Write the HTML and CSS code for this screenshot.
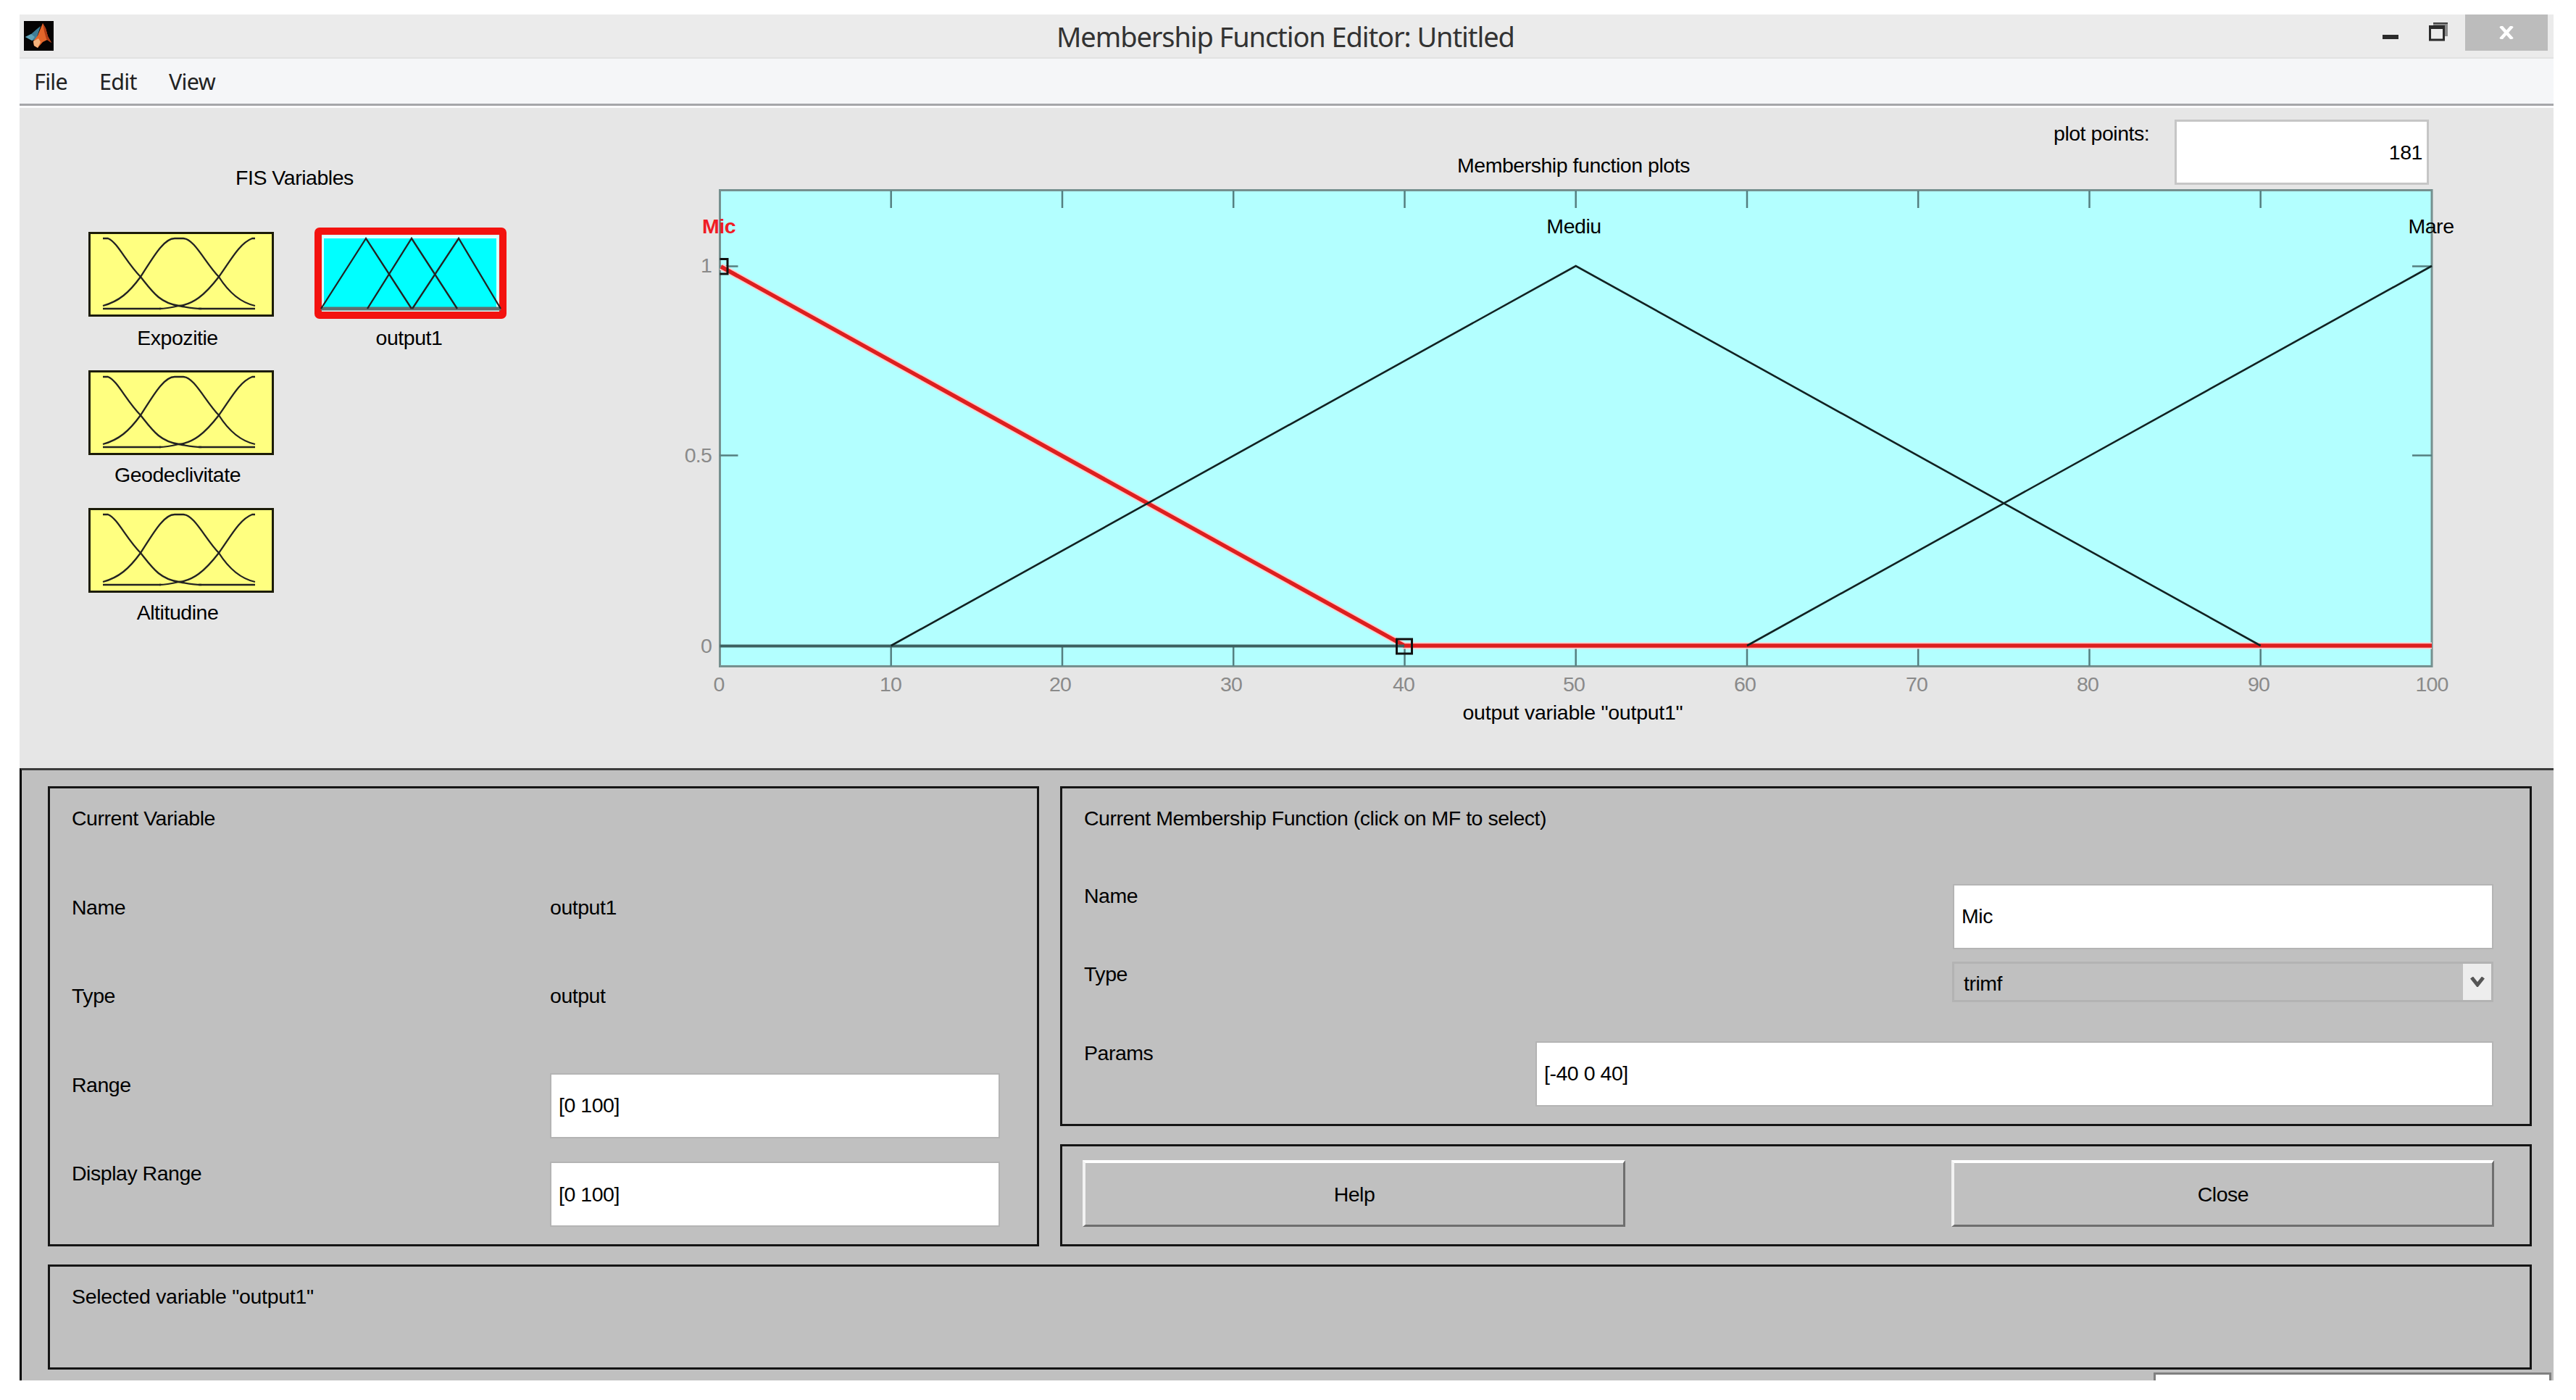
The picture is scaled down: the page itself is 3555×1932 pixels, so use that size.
FILE: index.html
```html
<!DOCTYPE html>
<html lang="en">
<head>
  <meta charset="UTF-8">
  <title>Membership Function Editor: Untitled</title>
  <link rel="stylesheet" href="styles.css">
</head>
<body>
  <div class="window">
    <header class="titlebar">
      <svg class="app-icon" viewBox="0 0 41 41">
        <rect width="41" height="41" fill="#050303"/>
        <path d="M2 22 L10 18 L18 11 L23 7 L17 25 L12 27 Z" fill="#3f7d96"/>
        <path d="M2 22 L10 18 L15 22 L11 27 Z" fill="#5fa3b8"/>
        <path d="M26 3 L30 10 L33 21 L38 30 L32 26 L26 29 L19 37 L14 34 L13 28 L19 20 Z" fill="#e4662a"/>
        <path d="M26 3 L30 10 L33 21 L38 30 L31 25 L28 14 Z" fill="#b03c16"/>
        <path d="M13 28 L20 24 L23 29 L19 37 L14 34 Z" fill="#f3b27c"/>
      </svg>
      <h1 class="title">Membership Function Editor: Untitled</h1>
      <div class="window-buttons">
        <svg class="win-min" viewBox="0 0 22 6"><rect width="22" height="6" fill="#2b2b2b"/></svg>
        <svg class="win-restore" viewBox="0 0 28 28">
          <path d="M6 2 H26 V21 H22 V7 H6 Z" fill="#8a8a8a"/>
          <path d="M6 3 H26" stroke="#444" stroke-width="2"/>
          <rect x="1.5" y="8" width="19" height="18" fill="#ececec" stroke="#2b2b2b" stroke-width="3"/>
          <path d="M0 8.5 H22" stroke="#2b2b2b" stroke-width="5"/>
        </svg>
        <div class="win-close">
          <svg viewBox="0 0 20 18"><path d="M2 0 L18 18 M18 0 L2 18" stroke="#fff" stroke-width="4.5"/></svg>
        </div>
      </div>
    </header>

    <nav class="menubar">
      <span class="menu-file">File</span>
      <span class="menu-edit">Edit</span>
      <span>View</span>
    </nav>

    <main class="plots">
      <section class="variables">
        <h2 class="variables-title">FIS Variables</h2>
        <div class="variables-list">
          <figure class="variable">
            <svg class="thumb" viewBox="0 0 256 117">
              <rect x="1.5" y="1.5" width="253" height="114" fill="#ffff80" stroke="#1c1c08" stroke-width="3"/>
              <g class="thumb-line">
                <path d="M20 9 H27 C40 14 52 42 72 62 C88 82 98 98 125 102 C140 105 150 106 156 106"/>
                <path d="M20 102 C42 96 56 84 72 62 C90 34 104 9 119 9 H131 C146 9 162 44 180 62 C194 84 212 98 230 102"/>
                <path d="M230 9 H226 C208 16 196 40 180 62 C160 88 144 100 125 102 C112 105 104 106 98 106"/>
                <path d="M20 106 H100 M152 106 H230"/>
              </g>
            </svg>
            <figcaption class="variable-name">Expozitie</figcaption>
          </figure>
          <figure class="variable variable-output">
            <svg class="thumb thumb-selected" viewBox="0 0 265 126">
              <rect x="5" y="5" width="255" height="116" rx="2" fill="#dff" stroke="#f3120f" stroke-width="10"/>
              <rect x="13" y="15" width="238" height="96" fill="#00ffff"/>
              <path d="M9 112 H257" stroke="#5f6f6f" stroke-width="5"/>
              <g class="thumb-line">
                <path d="M9 112 L71 15 L134 112"/>
                <path d="M73 112 L134 15 L197 112"/>
                <path d="M135 112 L199 15 L257 112"/>
              </g>
            </svg>
            <figcaption class="variable-name">output1</figcaption>
          </figure>
          <figure class="variable variable-input">
            <svg class="thumb" viewBox="0 0 256 117">
              <rect x="1.5" y="1.5" width="253" height="114" fill="#ffff80" stroke="#1c1c08" stroke-width="3"/>
              <g class="thumb-line">
                <path d="M20 9 H27 C40 14 52 42 72 62 C88 82 98 98 125 102 C140 105 150 106 156 106"/>
                <path d="M20 102 C42 96 56 84 72 62 C90 34 104 9 119 9 H131 C146 9 162 44 180 62 C194 84 212 98 230 102"/>
                <path d="M230 9 H226 C208 16 196 40 180 62 C160 88 144 100 125 102 C112 105 104 106 98 106"/>
                <path d="M20 106 H100 M152 106 H230"/>
              </g>
            </svg>
            <figcaption class="variable-name">Geodeclivitate</figcaption>
          </figure>
          <figure class="variable variable-input">
            <svg class="thumb" viewBox="0 0 256 117">
              <rect x="1.5" y="1.5" width="253" height="114" fill="#ffff80" stroke="#1c1c08" stroke-width="3"/>
              <g class="thumb-line">
                <path d="M20 9 H27 C40 14 52 42 72 62 C88 82 98 98 125 102 C140 105 150 106 156 106"/>
                <path d="M20 102 C42 96 56 84 72 62 C90 34 104 9 119 9 H131 C146 9 162 44 180 62 C194 84 212 98 230 102"/>
                <path d="M230 9 H226 C208 16 196 40 180 62 C160 88 144 100 125 102 C112 105 104 106 98 106"/>
                <path d="M20 106 H100 M152 106 H230"/>
              </g>
            </svg>
            <figcaption class="variable-name">Altitudine</figcaption>
          </figure>
        </div>
      </section>

      <section class="plot">
        <div class="plot-head">
          <h2 class="plot-title">Membership function plots</h2>
          <label class="points-label" for="points">plot points:</label>
          <input class="field points" id="points" type="text" value="181">
        </div>
        <svg class="chart" viewBox="900 255 2624 805">
          <rect class="axes" x="993.5" y="262.5" width="2362.5" height="657"/>
          <!-- ticks -->
          <path class="tick" d="M1229.7 263 v24 M1466 263 v24 M1702.2 263 v24 M1938.5 263 v24 M2174.7 263 v24 M2411 263 v24 M2647.2 263 v24 M2883.5 263 v24 M3119.7 263 v24"/>
          <path class="tick" d="M1229.7 919 v-27 M1466 919 v-27 M1702.2 919 v-27 M1938.5 919 v-27 M2174.7 919 v-27 M2411 919 v-27 M2647.2 919 v-27 M2883.5 919 v-27 M3119.7 919 v-27"/>
          <path class="tick" d="M993.5 367.5 h25 M993.5 628.5 h25 M3356 367.5 h-27 M3356 628.5 h-27"/>
          <!-- Mic -->
          <path class="mf-halo" d="M995 368 L1938 891 H3356"/>
          <path class="mf-selected" d="M995 368 L1938 891 H3356"/>
          <!-- Mediu, Mare -->
          <path class="mf-base" d="M993.5 891.5 H1938"/>
          <path class="mf" d="M1229.7 891 L2174.7 367 L3119.7 891"/>
          <path class="mf" d="M2411 891 L3356 367"/>
          <path class="handle" d="M993.5 357.5 H1004 V378 H993.5"/>
          <rect class="handle" x="1927.5" y="882" width="21" height="20"/>

          <g class="tick-label">
            <text x="992" y="954">0</text>
            <text x="1229" y="954">10</text>
            <text x="1463" y="954">20</text>
            <text x="1699" y="954">30</text>
            <text x="1937" y="954">40</text>
            <text x="2172" y="954">50</text>
            <text x="2408" y="954">60</text>
            <text x="2645" y="954">70</text>
            <text x="2881" y="954">80</text>
            <text x="3117" y="954">90</text>
            <text x="3356" y="954">100</text>
          </g>
          <g class="tick-label tick-label-y">
            <text x="982" y="376">1</text>
            <text x="982" y="638">0.5</text>
            <text x="982" y="901">0</text>
          </g>
          <text class="mf-name mf-name-selected" x="992" y="322">Mic</text>
          <text class="mf-name" x="2172" y="322">Mediu</text>
          <text class="mf-name" x="3355" y="322">Mare</text>
          <text class="mf-name axis-name" x="2170.5" y="993">output variable "output1"</text>
        </svg>
      </section>
    </main>

    <section class="controls">
      <div class="panel panel-variable">
        <span>Current Variable</span><span></span>
        <span>Name</span><span>output1</span>
        <span>Type</span><span>output</span>
        <span>Range</span><input class="field" type="text" value="[0 100]">
        <span>Display Range</span><input class="field" type="text" value="[0 100]">
      </div>

      <div class="controls-right">
        <div class="panel panel-mf">
          <div class="mf-heading">Current Membership Function (click on MF to select)</div>
          <div class="mf-row"><span>Name</span><input class="field field-name" type="text" value="Mic"></div>
          <div class="mf-row">
            <span>Type</span>
            <div class="select">
              <span class="select-value">trimf</span>
              <span class="select-arrow">
                <svg viewBox="0 0 20 14"><path d="M2 1 L10 11 L18 1" fill="none" stroke="#555" stroke-width="5"/></svg>
              </span>
            </div>
          </div>
          <div class="mf-row"><span>Params</span><input class="field field-params" type="text" value="[-40 0 40]"></div>
        </div>
        <div class="panel panel-buttons">
          <button class="button" type="button">Help</button>
          <button class="button" type="button">Close</button>
        </div>
      </div>

      <div class="panel panel-status">Selected variable "output1"</div>
      <div class="tooltip-edge"></div>
    </section>
  </div>
</body>
</html>
```

FILE: styles.css
```css
* {
  box-sizing: border-box;
}

body {
  margin: 0;
  background-color: #fff;
  font-family: "Liberation Sans", Arial, sans-serif;
  font-size: 28.5px;
  line-height: 32px;
  letter-spacing: -0.47px;
  color: #000;
  overflow: hidden;
}

h1, h2, figure {
  margin: 0;
  font-size: inherit;
  font-weight: normal;
}

svg {
  display: block;
}

.window {
  width: 3497px;
  height: 1885px;
  margin: 20px 0 0 27px;
  overflow: hidden;
  background-color: #e6e6e6;
}

/* title bar */
.titlebar {
  display: flex;
  height: 61px;
  background-color: #ebebeb;
  border-bottom: 2px solid #e2e2e2;
}

.app-icon {
  width: 41px;
  height: 41px;
  margin: 9px 0 0 6px;
}

.title {
  margin-left: 1384px;
  font-family: "Noto Sans", "Open Sans", sans-serif;
  font-size: 38px;
  line-height: 60px;
  letter-spacing: -1.1px;
  color: #333;
  white-space: nowrap;
}

.window-buttons {
  display: flex;
  margin-left: auto;
  margin-right: 8px;
}

.win-min {
  width: 22px;
  height: 6px;
  margin: 28px 42px 0 0;
}

.win-restore {
  width: 28px;
  height: 28px;
  margin: 9px 22px 0 0;
}

.win-close {
  display: flex;
  justify-content: center;
  width: 114px;
  height: 50px;
  padding-top: 16px;
  background-color: #bcbcbc;
}

.win-close svg {
  width: 20px;
  height: 18px;
}

.menubar {
  display: flex;
  height: 65px;
  margin-bottom: 3px;
  padding: 11px 0 0 20px;
  background-color: #f5f6f8;
  border-bottom: 3px solid #a5a6a9;
  box-shadow: 0 3px 0 #fafafb;
  font-family: "Noto Sans", "Open Sans", sans-serif;
  font-size: 30.5px;
  line-height: 40px;
  letter-spacing: -0.7px;
  color: #222;
}

.menu-file {
  width: 90px;
}

.menu-edit {
  width: 96px;
}

/* plots */
.plots {
  display: flex;
  height: 911px;
}

.variables {
  width: 873px;
  padding-top: 80px;
}

.variables-title {
  padding-left: 298px;
}

.variables-list {
  display: grid;
  grid-template-columns: 256px 265px;
  grid-auto-rows: 190.5px;
  column-gap: 56px;
  padding: 59px 0 0 95px;
}

.thumb {
  width: 256px;
  height: 117px;
}

.thumb-selected {
  width: 265px;
  height: 126px;
  margin: -6px 0 -3px;
}

.thumb-line {
  fill: none;
  stroke: #222;
  stroke-width: 2.3;
}

.variable-name {
  margin: 13px 10px 0 0;
  text-align: center;
}

.variable-output .variable-name {
  margin-right: 4px;
}

.variable-input {
  grid-column: 1;
}

.variable-input .variable-name {
  margin-top: 11px;
}

.plot {
  width: 2624px;
}

.plot-head {
  display: flex;
  height: 106px;
  padding-left: 1111px;
  white-space: nowrap;
}

.plot-title {
  width: 823px;
  padding-top: 63px;
}

.points-label {
  width: 167px;
  padding-top: 19px;
}

.chart {
  width: 2624px;
  height: 805px;
}

.axes {
  fill: #b3ffff;
  stroke: #76908f;
  stroke-width: 3;
}

.tick {
  fill: none;
  stroke: #557f80;
  stroke-width: 2.5;
}

.mf,
.mf-base,
.mf-halo,
.mf-selected,
.handle {
  fill: none;
}

.mf {
  stroke: #122;
  stroke-width: 2.6;
}

.mf-base {
  stroke: #3c6060;
  stroke-width: 4;
}

.mf-halo {
  stroke: #ffc9c9;
  stroke-width: 9;
}

.mf-selected {
  stroke: #dc1f1f;
  stroke-width: 5.5;
}

.handle {
  stroke: #111;
  stroke-width: 3;
}

.tick-label {
  fill: #8a8a8a;
  text-anchor: middle;
  letter-spacing: -0.8px;
}

.tick-label-y {
  text-anchor: end;
}

.mf-name {
  fill: #000;
  text-anchor: middle;
}

.mf-name-selected {
  fill: #f01c24;
  font-weight: bold;
}

.axis-name {
  letter-spacing: -0.25px;
}

/* form fields */
.field {
  height: 90px;
  padding: 0 10px;
  border: 2px solid #b4b4b4;
  border-radius: 0;
  background-color: #fff;
  font: inherit;
  letter-spacing: inherit;
  color: #000;
}

.points {
  width: 351px;
  height: 90px;
  margin-top: 16px;
  padding: 0 6px 0;
  border: 3px solid #c6c6c6;
  text-align: right;
}

/* controls */
.controls {
  display: grid;
  grid-template-columns: 1368px 2031px;
  grid-template-rows: 635px 145px;
  gap: 25px 29px;
  height: 845px;
  padding: 22px 0 0 36px;
  position: relative;
  background-color: #c0c0c0;
  border-top: 3px solid #3c3c3c;
  border-left: 3px solid #000;
}

.panel {
  border: 3px solid #151515;
}

.panel-variable {
  display: grid;
  grid-template-columns: 660px 621px;
  grid-template-rows: repeat(4, 122.5px) auto;
  align-items: start;
  padding: 25px 0 0 30px;
}

.controls-right {
  display: flex;
  flex-direction: column;
  gap: 25px;
}

.panel-mf {
  height: 469px;
  padding: 25px 50px 0 30px;
}

.mf-heading {
  height: 106.5px;
}

.mf-row {
  display: flex;
  justify-content: space-between;
  height: 108.5px;
}

.field-name {
  width: 746px;
}

.field-params {
  width: 1322px;
}

.select {
  display: flex;
  justify-content: space-between;
  width: 747px;
  height: 56px;
  margin-top: -1px;
  border: 3px solid #b3b3b3;
}

.select-value {
  padding: 11px 0 0 13px;
}

.select-arrow {
  display: flex;
  align-items: center;
  justify-content: center;
  width: 39px;
  background-color: #ededed;
}

.select-arrow svg {
  width: 20px;
  height: 14px;
}

.panel-buttons {
  display: flex;
  justify-content: space-between;
  height: 141px;
  padding: 19px 49px 0 28px;
}

.button {
  width: 749px;
  height: 92px;
  padding: 0;
  border: 4px solid;
  border-color: #fff #6e6e6e #6e6e6e #f2f2f2;
  border-right-width: 3px;
  border-bottom-width: 3px;
  background-color: #c0c0c0;
  font: inherit;
  letter-spacing: inherit;
  color: #000;
}

.panel-status {
  grid-column: 1 / 3;
  padding: 25px 0 0 30px;
  letter-spacing: -0.3px;
}

/* popup peeking in over the bottom edge */
.tooltip-edge {
  position: absolute;
  right: 3px;
  bottom: 0;
  width: 549px;
  height: 11px;
  background-color: #fff;
  border: 3px solid #808080;
  border-bottom: 0;
}
```
